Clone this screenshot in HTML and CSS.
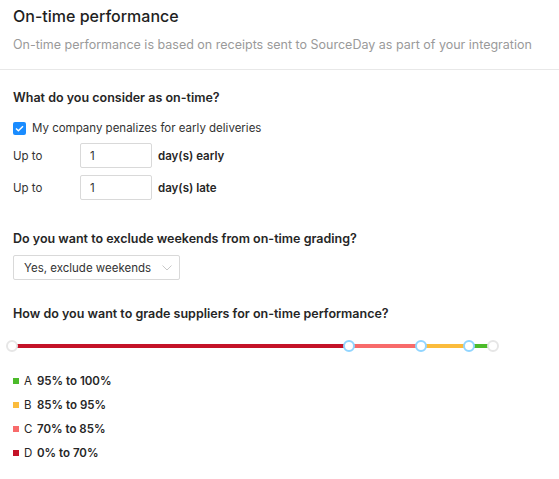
FILE: index.html
```html
<!DOCTYPE html>
<html lang="en">
<head>
  <meta charset="UTF-8">
  <title>On-time performance</title>
  <link rel="stylesheet" href="styles.css">
</head>
<body>

<div class="page-header">
  <h1>On-time performance</h1>
  <p class="subtitle">On-time performance is based on receipts sent to SourceDay as part of your integration</p>
</div>

<div class="settings">
  <section class="block">
    <h2>What do you consider as on-time?</h2>
    <label class="check">
      <span class="check-box">
        <svg width="9" height="7" viewBox="0 0 9 7"><path d="M1 3.5 L3.4 5.8 L8 1.2" fill="none" stroke="#fff" stroke-width="1.5"/></svg>
      </span>
      My company penalizes for early deliveries
    </label>
    <div class="day-row">
      <span class="up-to">Up to</span>
      <input type="text" value="1" />
      <span class="unit">day(s) early</span>
    </div>
    <div class="day-row">
      <span class="up-to">Up to</span>
      <input type="text" value="1" />
      <span class="unit">day(s) late</span>
    </div>
  </section>

  <section class="block weekends">
    <h2>Do you want to exclude weekends from on-time grading?</h2>
    <div class="select">
      <span>Yes, exclude weekends</span>
      <svg width="10" height="6" viewBox="0 0 10 6"><path d="M0.5 0.5 L5 5 L9.5 0.5" fill="none" stroke="#c8c8c8" stroke-width="1"/></svg>
    </div>
  </section>

  <section class="block">
    <h2>How do you want to grade suppliers for on-time performance?</h2>
    <div class="slider">
      <div class="track">
        <span class="seg grade-d" style="width: 70%"></span>
        <span class="seg grade-c" style="width: 15%"></span>
        <span class="seg grade-b" style="width: 10%"></span>
        <span class="seg grade-a" style="width: 5%"></span>
      </div>
      <span class="handle end" style="left: 0%"></span>
      <span class="handle" style="left: 70%"></span>
      <span class="handle" style="left: 85%"></span>
      <span class="handle" style="left: 95%"></span>
      <span class="handle end" style="left: 100%"></span>
    </div>

    <ul class="legend">
      <li><span class="dot grade-a"></span><span class="letter">A</span>95% to 100%</li>
      <li><span class="dot grade-b"></span><span class="letter">B</span>85% to 95%</li>
      <li><span class="dot grade-c"></span><span class="letter">C</span>70% to 85%</li>
      <li><span class="dot grade-d"></span><span class="letter">D</span>0% to 70%</li>
    </ul>
  </section>
</div>

</body>
</html>
```

FILE: styles.css
```css
body {
  margin: 0;
  background-color: #ffffff;
  font-family: 'Inter', 'Liberation Sans', sans-serif;
  color: #262626;
}
.page-header {
  padding: 6px 13px 14px;
  border-bottom: 1px solid #e8e8e8;
}
h1 {
  margin: 0;
  font-size: 16px;
  line-height: 20px;
  font-weight: 500;
  color: #1f1f1f;
}
.subtitle {
  margin: 9px 0 0;
  font-size: 12.5px;
  line-height: 20px;
  color: #9a9a9a;
}
.settings {
  padding: 18px 13px 0;
}
.block {
  margin-bottom: 29px;
}
.block.weekends {
  margin-bottom: 24px;
}
h2 {
  margin: 0;
  font-size: 12.5px;
  line-height: 20px;
  font-weight: 600;
  color: #262626;
}
.check {
  display: flex;
  align-items: center;
  gap: 6px;
  margin-top: 12px;
  font-size: 11.5px;
  line-height: 16px;
  color: #333;
}
.check-box {
  width: 13px;
  height: 13px;
  border-radius: 2px;
  background-color: #1a8cff;
  display: flex;
  align-items: center;
  justify-content: center;
}
.day-row {
  display: flex;
  align-items: center;
  margin-top: 7px;
  font-size: 11.5px;
}
.up-to {
  width: 67px;
  color: #333;
}
.day-row input {
  box-sizing: border-box;
  width: 72px;
  height: 25px;
  padding: 0 9px;
  border: 1px solid #d9d9d9;
  border-radius: 2px;
  font-family: inherit;
  font-size: 11.5px;
  color: #333;
}
.unit {
  margin-left: 6px;
  font-weight: 600;
  color: #262626;
}
.select {
  box-sizing: border-box;
  margin-top: 6px;
  width: 167px;
  height: 25px;
  padding: 0 7px 0 10px;
  border: 1px solid #d9d9d9;
  border-radius: 2px;
  display: flex;
  align-items: center;
  justify-content: space-between;
  font-size: 11.5px;
  color: #333;
}
.slider {
  position: relative;
  margin: 16px 53px 0 -1px;
  height: 12px;
}
.track {
  display: flex;
  height: 4px;
  padding-top: 4px;
}
.seg {
  height: 4px;
}
.grade-a { background-color: #4cbb2a; }
.grade-b { background-color: #fbbc3c; }
.grade-c { background-color: #f86b6b; }
.grade-d { background-color: #c41228; }
.handle {
  position: absolute;
  top: 0;
  box-sizing: border-box;
  width: 12px;
  height: 12px;
  margin-left: -6px;
  border-radius: 50%;
  background: #fff;
  border: 2px solid #91d5ff;
}
.handle.end {
  border-color: #e6e6e6;
}
.legend {
  list-style: none;
  margin: 17px 0 0;
  padding: 0;
}
.legend li {
  display: flex;
  align-items: center;
  height: 24px;
  font-size: 11.5px;
  font-weight: 600;
  color: #262626;
}
.dot {
  width: 6px;
  height: 6px;
  margin-right: 5px;
}
.letter {
  width: 13px;
  font-weight: 400;
}
```
